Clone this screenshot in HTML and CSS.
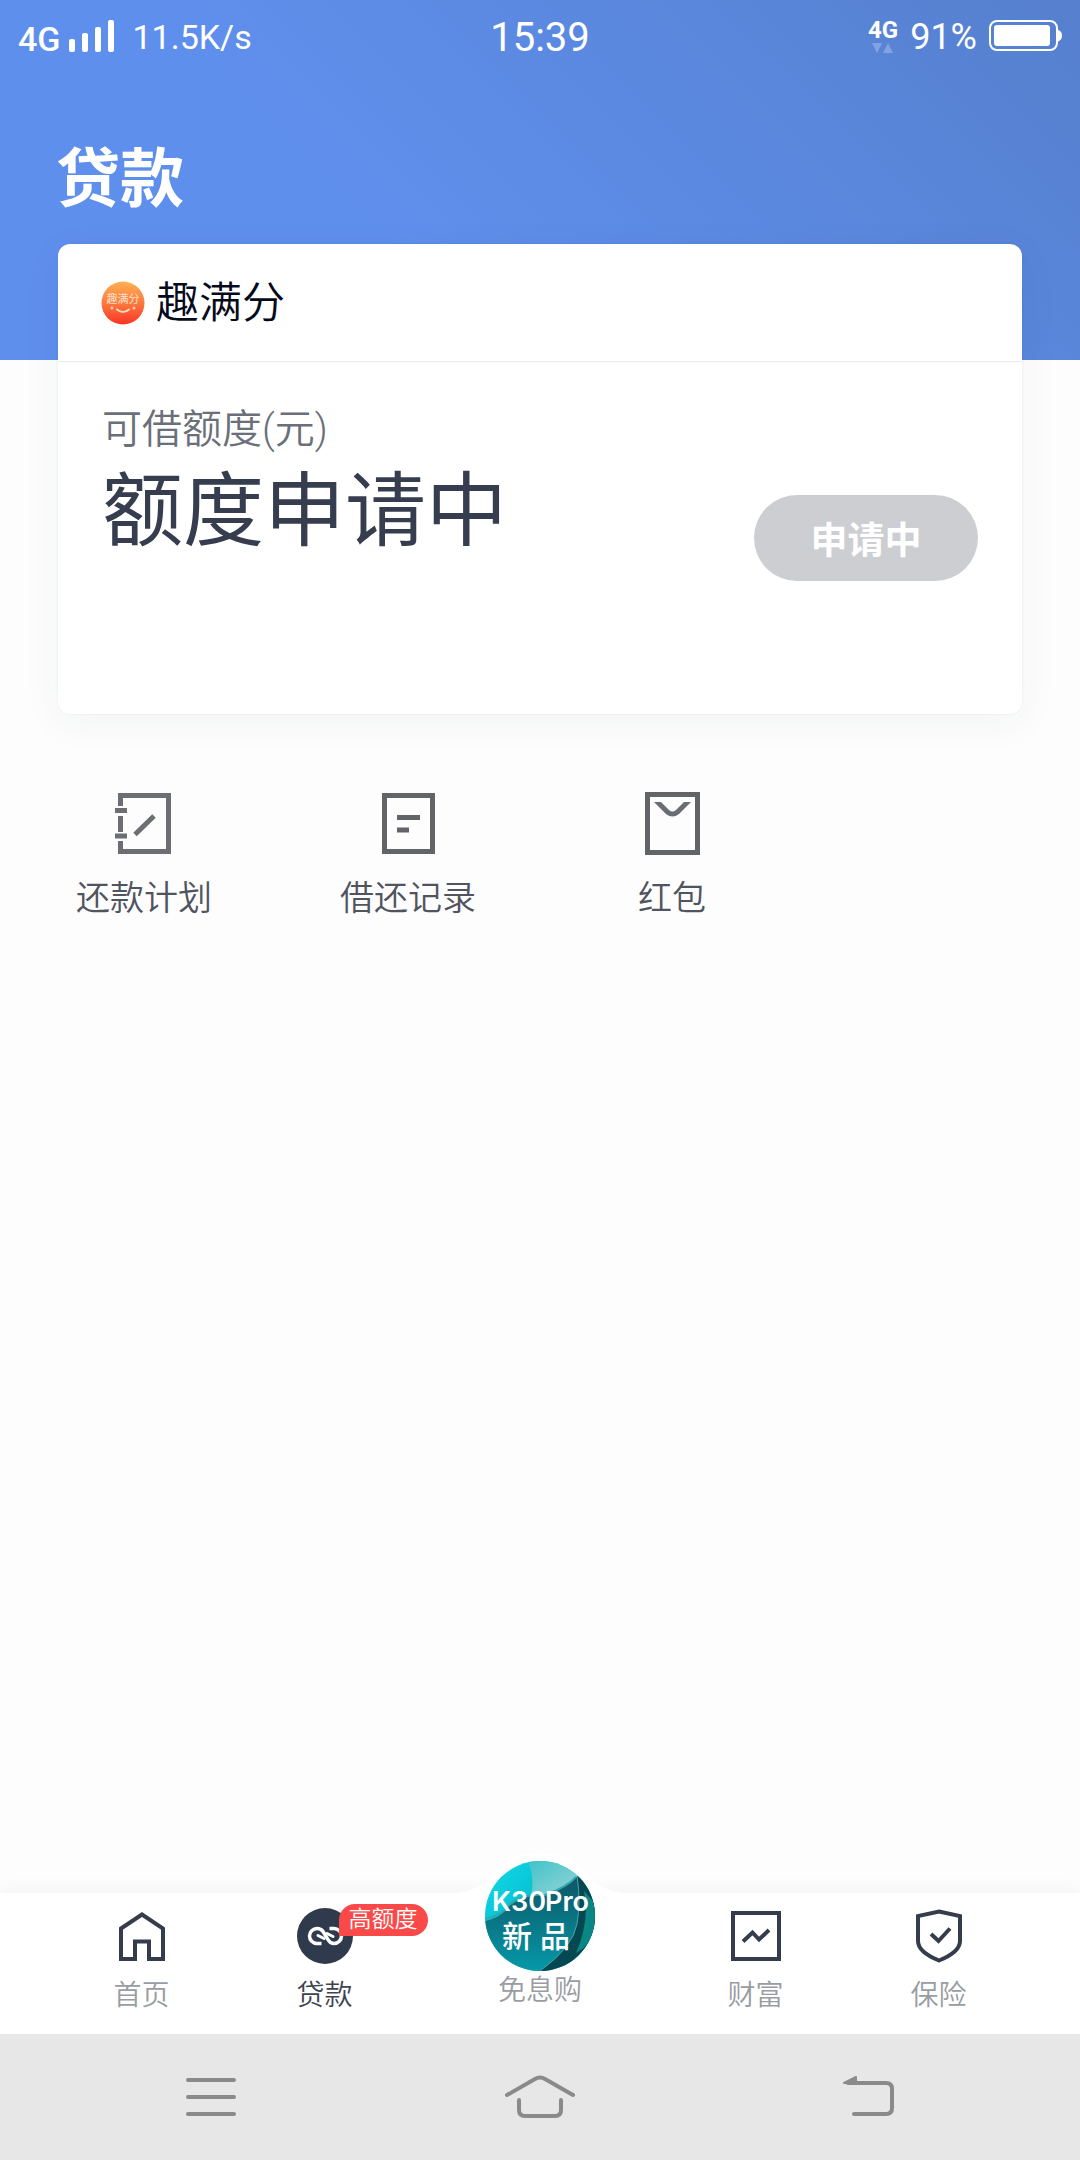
FILE: index.html
```html
<!DOCTYPE html>
<html lang="zh-CN">
<head>
<meta charset="utf-8">
<meta name="viewport" content="width=device-width, initial-scale=1">
<title>贷款</title>
<link rel="stylesheet" href="styles.css">
</head>
<body>
<header class="hero">
  <div class="status">
    <div class="status-left">
      <span class="carrier">4G</span>
      <svg class="signal" width="46" height="33" viewBox="0 0 46 33" fill="#fff" aria-hidden="true">
        <rect x="0" y="19" width="6" height="13" rx="2"/><rect x="13" y="13" width="6" height="19" rx="2"/><rect x="26" y="7" width="6" height="25" rx="2"/><rect x="39" y="0" width="6" height="32" rx="2"/>
      </svg>
      <span class="speed">11.5K/s</span>
    </div>
    <time class="clock">15:39</time>
    <div class="status-right">
      <span class="data">
        <span class="data-label">4G</span>
        <svg width="22" height="11" viewBox="0 0 22 11" fill="#fff" fill-opacity=".25" aria-hidden="true"><path d="M0 0h10L5 10zM11 10h10L16 0z"/></svg>
      </span>
      <span class="percent">91%</span>
      <svg width="73" height="32" viewBox="0 0 73 32" aria-hidden="true">
        <rect x="1" y="1" width="67" height="29" rx="7" fill="none" stroke="#fff" stroke-width="2"/>
        <rect x="5" y="5" width="56" height="21" rx="3" fill="#fff"/>
        <path d="M69 10q4 1 4 5.500t-4 6z" fill="#fff"/>
      </svg>
    </div>
  </div>
  <h1 class="title">贷款</h1>
</header>

<main class="main">
  <section class="card">
    <div class="card-head">
      <svg width="44" height="44" viewBox="0 0 44 44" aria-hidden="true">
        <defs><linearGradient id="logo" x1="0" y1="0" x2="0" y2="1"><stop offset="0" stop-color="#ffb053"/><stop offset=".5" stop-color="#fb7a3e"/><stop offset="1" stop-color="#fb3427"/></linearGradient></defs>
        <circle cx="22" cy="22" r="21.500" fill="url(#logo)"/>
        <text class="logo-text" x="22" y="22" text-anchor="middle">趣满分</text>
        <path d="M16 28.500q6 5 12 0" fill="none" stroke="#ffd9c8" stroke-width="2" stroke-linecap="round"/>
        <circle cx="11" cy="27" r="1.500" fill="#ffc9b0"/><circle cx="33" cy="27" r="1.500" fill="#ffc9b0"/>
      </svg>
      <h2 class="brand">趣满分</h2>
    </div>
    <div class="card-body">
      <div class="quota">
        <p class="quota-label">可借额度(元)</p>
        <p class="quota-value">额度申请中</p>
      </div>
      <button class="apply" type="button">申请中</button>
    </div>
  </section>

  <nav class="shortcuts" aria-label="快捷入口">
    <a class="shortcut" href="#plan">
      <svg width="58" height="64" viewBox="0 0 58 64" fill="none" stroke="#6c6e74" stroke-width="5" aria-hidden="true">
        <path d="M5.500 14V3.500h48v56h-48V49M5.500 24v16M0 18.500h12M0 44h12"/><path d="M20 42.500 39 24"/>
      </svg>
      <span>还款计划</span>
    </a>
    <a class="shortcut" href="#records">
      <svg width="58" height="64" viewBox="0 0 58 64" fill="none" stroke="#626468" stroke-width="5" aria-hidden="true">
        <path d="M5.500 3.500h48v56h-48z"/><path d="M18 25.500h23M18 38h12"/>
      </svg>
      <span>借还记录</span>
    </a>
    <a class="shortcut" href="#coupons">
      <svg width="58" height="64" viewBox="0 0 58 64" aria-hidden="true">
        <path d="M4.500 2.500h50v58h-50z" fill="none" stroke="#626468" stroke-width="5"/>
        <path d="M11 10h7l8 8q3.500 3 7 0l8-8h7L36 22q-6.500 5-13 0z" fill="#6a6d74"/>
      </svg>
      <span>红包</span>
    </a>
  </nav>
</main>

<nav class="tabs" aria-label="主导航">
  <a class="tab" href="#home">
    <svg width="56" height="56" viewBox="0 0 56 56" fill="none" stroke="#353d4d" stroke-width="4" aria-hidden="true"><path d="M7 20.500 28 6.500l21 14V51H35V33.500H21V51H7z"/></svg>
    <span>首页</span>
  </a>
  <a class="tab tab-active" href="#loan" aria-current="page">
    <svg width="56" height="56" viewBox="0 0 56 56" fill="none" aria-hidden="true">
      <circle cx="28" cy="28" r="28" fill="#2f3a4c"/>
      <path d="M24.500 35.500H20a7.500 7.500 0 0 1 0-15q4 0 6 3l5 8q2 4 6 4a7.500 7.500 0 0 0 0-15h-4.500" stroke="#fff" stroke-width="3.500"/>
      <path d="M21 27.500l6 3M36 28.500l-6-3" stroke="#fff" stroke-width="3" stroke-linecap="round"/>
    </svg>
    <span>贷款</span>
    <span class="badge">高额度</span>
  </a>
  <a class="tab tab-promo" href="#shop">
    <svg class="promo" width="180" height="110" viewBox="0 0 180 110" aria-hidden="true">
      <defs>
        <clipPath id="disc"><circle cx="90" cy="55" r="55"/></clipPath>
        <linearGradient id="sea" x1="0" y1="0" x2="1" y2="1"><stop offset="0" stop-color="#12dbea"/><stop offset=".35" stop-color="#08c3d4"/><stop offset="1" stop-color="#0796a3"/></linearGradient>
        <linearGradient id="foam" x1="0" y1="0" x2="1" y2="1"><stop offset="0" stop-color="#3fc4ca"/><stop offset="1" stop-color="#a8d6d8"/></linearGradient>
        <linearGradient id="deep" x1="0" y1="0" x2="0" y2="1"><stop offset="0" stop-color="#0d5666"/><stop offset="1" stop-color="#059dac"/></linearGradient>
      </defs>
      <path d="M0 32q30 0 46-22Q60-8 90-8t44 18q16 22 46 22z" fill="#fff"/>
      <g clip-path="url(#disc)">
        <rect x="35" width="110" height="110" fill="url(#sea)"/>
        <path d="M78 0h60v20q-24 4-36 13-12 8-22 6 6-20-2-39z" fill="url(#foam)"/>
        <path d="M35 60q18-4 24-16 14-12 36-10 22-8 31-18l26 10v90H35z" fill="url(#deep)"/>
        <path d="M35 58q18-4 24-14 14-12 36-10 22-8 31-18" fill="none" stroke="#35a5ad" stroke-width="2"/>
        <path d="M127 15q4 25 0 48t-37 47h60V20z" fill="#064852"/>
        <path d="M134 30q6 30-8 62 20-10 26-42z" fill="#0a8784"/>
        <path d="M127 15q4 25 0 48t-37 47" fill="none" stroke="#46a3ad" stroke-width="1"/>
      </g>
      <text class="promo-model" x="42" y="50">K30</text><text class="promo-model" x="95" y="50">Pro</text>
      <text class="promo-new" x="52" y="86">新</text><text class="promo-new" x="90" y="86">品</text>
    </svg>
    <span>免息购</span>
  </a>
  <a class="tab" href="#wealth">
    <svg width="56" height="56" viewBox="0 0 56 56" fill="none" stroke="#353d4d" stroke-width="4" aria-hidden="true"><path d="M5 5h46v46H5z"/><path d="M15 33.500 24.500 24.500l6.500 7L41 22"/></svg>
    <span>财富</span>
  </a>
  <a class="tab" href="#insurance">
    <svg width="56" height="56" viewBox="0 0 56 56" fill="none" stroke="#353d4d" stroke-width="4" aria-hidden="true"><path d="M28 3.500 49 8v25q0 11-21 19.500Q7 44 7 33V8z"/><path d="M20 26l7.500 7L39 20.500"/></svg>
    <span>保险</span>
  </a>
</nav>

<footer class="system">
  <button type="button" aria-label="菜单"><svg width="70" height="46" viewBox="0 0 70 46" fill="none" stroke="#8a8a8a" stroke-width="4" stroke-linecap="round"><path d="M12 6h46M12 23h46M12 40h46"/></svg></button>
  <button type="button" aria-label="主屏幕"><svg width="70" height="46" viewBox="0 0 70 46" fill="none" stroke="#8a8a8a" stroke-width="4" stroke-linecap="round"><path d="M2 21 30 5q5-3 10 0l28 16M14 26v10q0 6 6 6h30q6 0 6-6V26"/></svg></button>
  <button type="button" aria-label="返回"><svg width="70" height="46" viewBox="0 0 70 46" fill="none" stroke="#8a8a8a" stroke-width="4" stroke-linecap="round"><path d="M14 9h38q6 0 6 6v19q0 6-6 6H20"/><path d="M10 9 22 3v6z" fill="#8a8a8a" stroke-width="2" stroke-linejoin="round"/></svg></button>
</footer>
</body>
</html>
```
FILE: styles.css
```css
* {
  box-sizing: border-box;
}

body {
  display: flex;
  flex-direction: column;
  min-height: 100vh;
  margin: 0;
  background: #fdfdfd;
  color: #353d4f;
  font-family: Roboto, "Noto Sans CJK SC", sans-serif;
  font-weight: 350;
}

h1, h2, p {
  margin: 0;
}

a {
  color: inherit;
  text-decoration: none;
}

svg {
  display: block;
  flex: none;
}

.hero {
  height: 360px;
  background: linear-gradient(45deg, #5f8fed 35%, #5680ce);
  color: #fff;
}

.status {
  display: grid;
  grid-template-columns: 1fr auto 1fr;
  align-items: center;
  height: 72px;
  padding: 0 18px;
  font-weight: 400;
}

.status-left,
.status-right {
  display: flex;
  align-items: center;
}

.status-left {
  gap: 9px;
}

.status-right {
  justify-content: flex-end;
  gap: 12px;
}

.carrier {
  padding-top: 6px;
  font-size: 34px;
  font-weight: 500;
}

.speed {
  margin-left: 8px;
  padding-top: 2px;
  font-size: 34px;
}

.clock {
  padding-top: 2px;
  font-size: 40px;
}

.data {
  display: flex;
  flex-direction: column;
  align-items: center;
  gap: 2px;
}

.data-label {
  font-size: 24px;
  font-weight: 700;
  line-height: 22px;
}

.percent {
  padding-top: 2px;
  font-size: 36px;
}

.title {
  padding: 60px 56px 0;
  font-size: 64px;
  font-weight: 700;
  line-height: 96px;
}

.main {
  flex: 1;
}

.card {
  position: relative;
  margin: -116px 58px 0;
  border-radius: 12px;
  background: #fff;
  box-shadow: 0 8px 40px rgba(40, 60, 60, 0.05), 0 0 2px rgba(0, 0, 0, 0.08);
}

.card-head {
  display: flex;
  align-items: center;
  gap: 11px;
  height: 118px;
  padding: 0 43px;
  border-bottom: 1px solid #ebebed;
}

.logo-text {
  fill: #ffe0cc;
  font-size: 11px;
  font-weight: 400;
}

.brand {
  color: #060b1c;
  font-size: 43px;
  font-weight: 350;
  line-height: 64px;
}

.card-body {
  display: flex;
  align-items: center;
  justify-content: space-between;
  min-height: 352px;
  padding: 38px 44px;
}

.quota {
  align-self: flex-start;
}

.quota-label {
  color: #6b6f79;
  font-size: 40px;
  line-height: 60px;
}

.quota-value {
  padding-top: 4px;
  font-size: 81px;
  font-weight: 400;
  line-height: 96px;
}

.apply {
  width: 224px;
  height: 86px;
  padding: 0;
  border: 0;
  border-radius: 43px;
  background: #cdced2;
  color: #fff;
  font: inherit;
  font-size: 37px;
  font-weight: 700;
}

.shortcuts {
  display: grid;
  grid-template-columns: repeat(4, 1fr);
  padding: 78px 12px 0;
}

.shortcut {
  display: flex;
  flex-direction: column;
  align-items: center;
  gap: 18px;
  color: #50545f;
  font-size: 34px;
  line-height: 48px;
}

.tabs {
  display: grid;
  grid-template-columns: 183fr 183fr 248fr 183fr 183fr;
  height: 141px;
  padding: 15px 50px 0;
  background: #fff;
  box-shadow: 0 -4px 16px rgba(0, 0, 0, 0.04);
}

.tab {
  position: relative;
  display: flex;
  flex-direction: column;
  align-items: center;
  gap: 12px;
  color: #999ca2;
  font-size: 28px;
  line-height: 40px;
}

.tab-active {
  color: #3e4350;
}

.badge {
  position: absolute;
  top: -4px;
  left: calc(50% + 14px);
  padding: 0 10px;
  border-radius: 16px 16px 16px 0;
  background: #f94a49;
  color: #fff;
  font-size: 23px;
  line-height: 32px;
  white-space: nowrap;
}

.tab-promo {
  gap: 0;
  margin-top: -47px;
}

.promo {
  overflow: visible;
}

.promo-model {
  fill: #fff;
  font-family: Inter, sans-serif;
  font-size: 27px;
  font-weight: 600;
}

.promo-new {
  fill: #fff;
  font-size: 30px;
  font-weight: 500;
}

.system {
  display: grid;
  grid-template-columns: repeat(3, 1fr);
  align-items: center;
  height: 126px;
  padding: 0 47px;
  background: #e7e7e7;
}

.system button {
  display: flex;
  justify-content: center;
  padding: 0;
  border: 0;
  background: none;
}
```
